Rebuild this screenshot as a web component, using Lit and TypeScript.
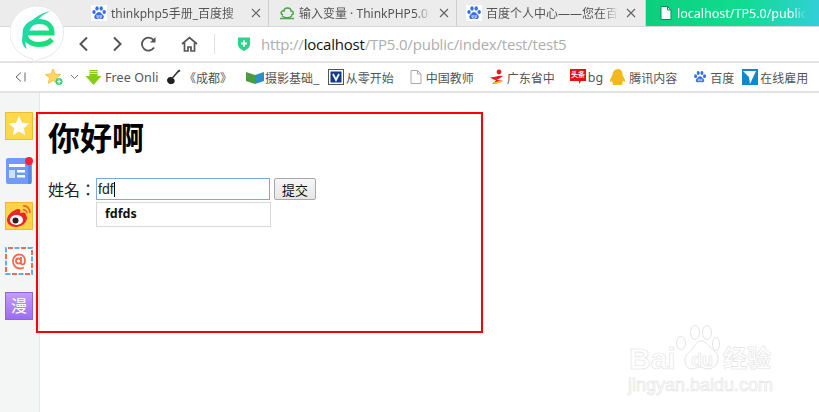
import { LitElement, html, css } from "lit";
import { customElement } from "lit/decorators.js";

const paw = (s: number) => html`<svg width=${s} height=${s} viewBox="0 0 16 16"><rect width="16" height="16" fill="#fff"/><g fill="#3570e8"><ellipse cx="3" cy="7" rx="1.7" ry="2.1"/><ellipse cx="6" cy="3.4" rx="1.7" ry="2.2"/><ellipse cx="10.2" cy="3.4" rx="1.7" ry="2.2"/><ellipse cx="13.2" cy="7" rx="1.7" ry="2.1"/><path d="M8 7c2 0 2.600 2 4 3 1.500 1.200.9 4-1.200 4-1 0-1.800-.4-2.800-.4S6.300 14 5.300 14c-2.100 0-2.700-2.800-1.200-4C5.400 9 6 7 8 7z"/></g><path d="M6 10v2.400h1.300V10M9 10v2.400h1.300V10" fill="none" stroke="#fff" stroke-width=".7"/></svg>`;
const doc = (stroke: string, fill: string) => html`<svg width="12" height="14" viewBox="0 0 12 14"><path d="M1 .5h6.500L11 4v9.500H1z" fill=${fill} stroke=${stroke}/><path d="M7.500.5V4H11" fill="none" stroke=${stroke}/></svg>`;
const x = html`<svg class="x" width="10" height="10" viewBox="0 0 10 10"><path d="M1 1l8 8M9 1l-8 8" stroke="#666" stroke-width="1.200" fill="none"/></svg>`;

@customElement("app-root")
export class AppRoot extends LitElement {
  static styles = css`
    :host { display: block; width: 819px; height: 412px; overflow: hidden; position: relative; background: #fff; font-family: "Noto Sans CJK SC", "Liberation Sans", sans-serif; color: #000; }
    .tabs { height: 26px; background: #ececec; border-bottom: 1px solid #d8d8d8; display: flex; padding-left: 89px; }
    .tab { height: 26px; display: flex; align-items: center; gap: 4px; border-right: 1px solid #cfcfcf; font: 12px "Noto Sans", "Noto Sans CJK SC", sans-serif; color: #555; box-sizing: border-box; padding-left: 2px; white-space: nowrap; position: relative; flex: none; }
    .tab svg { flex: none; }
    .tab .t { flex: none; width: 132px; white-space: nowrap; -webkit-mask-image: linear-gradient(90deg,#000 88%,transparent); mask-image: linear-gradient(90deg,#000 88%,transparent); }
    .tab .x { margin-left: 4px; }
    .t1 { width: 180px; } .t2 { width: 188px; padding-left: 10px; } .t3 { width: 189px; padding-left: 9px; }
    .active { width: 174px; background: linear-gradient(90deg,#0ccf7c,#10dc90 55%,#33cfd8); color: #fff; border: 0; padding-left: 14px; font-size: 12.500px; gap: 5px; overflow: hidden; }
    .active .t { width: 130px; }
    .active .x { margin-left: 8px; }
    .active .x path { stroke: #555; }
    .addr { height: 34px; display: flex; align-items: center; padding-left: 78px; border-bottom: 2px solid #e4e4e4; background: #fff; }
    .nav { display: flex; align-items: center; gap: 16px; width: 136px; }
    .fwd { margin-left: 7px; } .rel { margin-left: 1px; } .home { margin-left: 8px; }
    .sep { width: 1px; height: 20px; background: #e0e0e0; margin-right: 22px; }
    .url { font: 15px "Open Sans", "Noto Sans", sans-serif; color: #aeaeae; margin-left: 10px; white-space: nowrap; letter-spacing: -0.2px; }
    .url b { font-weight: 400; color: #111; }
    .marks { height: 28px; display: flex; align-items: center; border-bottom: 2px solid #e2e2e2; padding-left: 15px; font: 12px "Noto Sans CJK SC", sans-serif; color: #555; white-space: nowrap; }
    .m { display: flex; align-items: center; gap: 1px; position: relative; flex: none; }
    .m svg { flex: none; }
    .latin { font: 12.500px "Noto Sans", sans-serif; }
    .star { margin-left: 19px; gap: 4px; } .chev { margin-left: 2px; }
    .free { margin-left: 6px; gap: 3px; } .free span { width: 50px; letter-spacing: .1px; }
    .gtr { margin-left: 11px; gap: 3px; }
    .pho { margin-left: 14px; } .vv { margin-left: 8px; gap: 2px; } .cn { margin-left: 16px; gap: 4px; }
    .gd { margin-left: 15px; gap: 2px; } .tt { margin-left: 15px; gap: 2px; } .qq { margin-left: 7px; gap: 3px; }
    .bd { margin-left: 16px; gap: 3px; } .hr { margin-left: 8px; gap: 2px; }
    .body { display: flex; height: 319px; }
    .side { height: 100%; background: #f4f6f5; border-right: 1px solid #e6e6e6; flex: none; display: flex; flex-direction: column; gap: 17px; padding: 19px 0 0 5px; box-sizing: border-box; width: 40px; }
    .ic { width: 28px; height: 28px; position: relative; box-sizing: border-box; display: block; overflow: visible; }
    .main { flex: 1; position: relative; }
    .box { width: 447px; height: 221px; margin: 19px 0 0 -4px; border: 2px solid #f00; box-sizing: border-box; padding: 4px 0 0 10px; }
    h1 { margin: 0; font: 700 32px/36px "Noto Sans CJK SC", sans-serif; height: 36px; }
    .form { display: flex; align-items: center; margin-top: 23px; font: 16px/22px "Noto Sans CJK TC", sans-serif; height: 24px; color: #222; }
    .lab { width: 48px; flex: none; white-space: nowrap; }
    .inp { width: 174px; height: 22px; border: 1.500px solid #7ea6e8; box-sizing: border-box; font: 14px/19px "Liberation Sans", sans-serif; padding-left: 1px; color: #222; display: flex; align-items: center; }
    .inp i { width: 1px; height: 15px; background: #000; }
    .btn { margin-left: 4px; width: 42px; height: 22px; border: 1px solid #a9a9a9; background: linear-gradient(#f6f6f6,#e6e6e6); border-radius: 2px; font: 13px "Noto Sans CJK SC", sans-serif; color: #111; padding: 0; box-sizing: border-box; }
    .sug { margin: 1px 0 0 48px; width: 175px; height: 25px; border: 1px solid #d8d8d8; box-sizing: border-box; font: 700 12.500px/22px "Noto Sans", sans-serif; padding-left: 8px; color: #111; }
    .logo { position: absolute; left: 10px; top: 5px; }
    .wm { position: absolute; left: 628px; top: 324px; width: 170px; height: 76px; color: #fff; }
    .wm span { position: absolute; -webkit-text-stroke: 0.600px #e2e2e2; white-space: nowrap; }
    .wm .ba { left: 1px; top: 20px; font: 700 30px/30px "Liberation Sans", sans-serif; }
    .wm .du { left: 63px; top: 26px; font: 700 18px/20px "Liberation Sans", sans-serif; }
    .wm .jy { left: 95px; top: 18px; font: 700 24px/30px "Noto Sans CJK SC", sans-serif; }
    .wm .ur { left: 0; top: 51px; font: 400 18px/20px "Liberation Sans", sans-serif; }
    .wm svg { position: absolute; left: 48px; top: 0; }
  `;

  render() {
    return html`
      <div class="tabs">
        <div class="tab t1">${paw(16)}<span class="t">thinkphp5手册_百度搜</span>${x}</div>
        <div class="tab t2"><svg width="16" height="14" viewBox="0 0 16 14"><path d="M4 9C1 8 2 4 5 5c0-4 7-4 7 0 3 0 3 4 0 4M3 10c3 2 7 2 10 0M1 12.500h14" fill="none" stroke="#4ca64c" stroke-width="1.500"/></svg><span class="t">输入变量 · ThinkPHP5.0</span>${x}</div>
        <div class="tab t3">${paw(16)}<span class="t">百度个人中心——您在百</span>${x}</div>
        <div class="tab active">${doc("#0a8f5c", "#fff")}<span class="t">localhost/TP5.0/public</span>${x}</div>
      </div>
      <div class="addr">
        <div class="nav">
          <svg width="11" height="16" viewBox="0 0 11 16"><path d="M9 1.500L2.500 8 9 14.500" fill="none" stroke="#555" stroke-width="2"/></svg>
          <svg class="fwd" width="11" height="16" viewBox="0 0 11 16"><path d="M2 1.500L8.500 8 2 14.500" fill="none" stroke="#555" stroke-width="2"/></svg>
          <svg class="rel" width="17" height="17" viewBox="0 0 17 17"><path d="M14 11.500A6.500 6.500 0 1 1 13.500 4" fill="none" stroke="#555" stroke-width="1.800"/><path d="M15.500 1v5.500H10z" fill="#555"/></svg>
          <svg class="home" width="17" height="16" viewBox="0 0 17 16"><path d="M1 8l7.500-6.500L16 8M3.500 7v8h3.500v-4h3v4h3.500V7" fill="none" stroke="#555" stroke-width="1.700"/></svg>
        </div>
        <div class="sep"></div>
        <svg width="14" height="16" viewBox="0 0 14 16"><path d="M1 1.500h12v7c0 3-3 5-6 6.500-3-1.500-6-3.500-6-6.500z" fill="#2bd48c"/><path d="M7 4.500v6M4 7.500h6" stroke="#fff" stroke-width="2"/></svg>
        <div class="url">http://<b>localhost</b>/TP5.0/public/index/test/test5</div>
      </div>
      <div class="marks">
        <svg width="11" height="12" viewBox="0 0 11 12"><path d="M6 1.500L1 6l5 4.500M10 1.500v9" fill="none" stroke="#666"/></svg>
        <div class="m star"><svg width="19" height="18" viewBox="0 0 19 18"><path d="M8 1l2.200 5 5.300.5-4 3.600 1.200 5.300L8 12.600l-4.700 2.800 1.200-5.300-4-3.600L5.800 6z" fill="#ffd75e" stroke="#e8b93a" stroke-width=".8"/><circle cx="14" cy="13.500" r="3.500" fill="#4cc97a"/><path d="M14 11.500v4M12 13.500h4" stroke="#fff" stroke-width="1.200"/></svg><svg class="chev" width="9" height="6" viewBox="0 0 9 6"><path d="M1 1l3.500 3.500L8 1" fill="none" stroke="#777"/></svg></div>
        <div class="m free latin"><svg width="17" height="17" viewBox="0 0 17 17"><path d="M4.500 1h8v6h4L8.500 16 .5 7h4z" fill="#84cc16"/><path d="M4.500 2.500h8M4.500 4.500h8" stroke="#d6f0a0"/></svg><span>Free Onli</span></div>
        <div class="m gtr"><svg width="15" height="16" viewBox="0 0 15 16"><path d="M2.500 8.500c1.500-1 3.500-.5 5 1s1.500 3 .7 4.200c-1.200 1.800-4.200 1.800-6 .2-1.800-1.700-1.500-4 .3-5.400z" fill="#222"/><path d="M6 9.500l6.500-7.500" stroke="#333" stroke-width="1.600"/><path d="M11.500 2l2-1.500 1 1.500-2 1.500z" fill="#333"/></svg><span>《成都》</span></div>
        <div class="m pho"><svg width="18" height="15" viewBox="0 0 18 15"><path d="M0 2l9 3v9L0 11z" fill="#4c9a3c"/><path d="M9 5l9-3v9l-9 3z" fill="#2b8fc4"/></svg><span>摄影基础_</span></div>
        <div class="m vv"><svg width="16" height="16" viewBox="0 0 16 16"><rect x=".5" y=".5" width="15" height="15" fill="#fff" stroke="#555"/><rect x="2.500" y="2.500" width="11" height="11" fill="#123a8c"/><path d="M5 5l3 6 3-6" fill="none" stroke="#fff" stroke-width="1.800"/></svg><span>从零开始</span></div>
        <div class="m cn">${doc("#aaa", "#fff")}<span>中国教师</span></div>
        <div class="m gd"><svg width="16" height="16" viewBox="0 0 16 16"><circle cx="10" cy="3" r="2.400" fill="#e02020"/><path d="M1 8c4 1 8-2 13-1-3 2-5 4-8 4 3 0 6 0 8 1-4 2-8 3-11 3 2-1 3-3 4-4-2 0-4-1-6-3z" fill="#e02020"/><path d="M4 14c3 0 6-1 9-2" stroke="#f0c020" stroke-width="1.500" fill="none"/></svg><span>广东省中</span></div>
        <div class="m tt latin"><svg width="16" height="18" viewBox="0 0 16 18"><path d="M0 1h16v12h-5l-2 3v-3H0z" fill="#e81010"/><text x="8" y="9" font-size="7" font-weight="700" fill="#fff" text-anchor="middle" font-family="Noto Sans CJK SC">头条</text></svg><span>bg</span></div>
        <div class="m qq"><svg width="16" height="18" viewBox="0 0 16 18"><path d="M8 1c3.500 0 4.500 3 4.500 6 1 2 3 5 2.500 6.500-.4.800-1.500 0-2-1 0 1.500-1 3-1 3 1 .8.500 1.500-2 1.500H5c-2.500 0-3-.7-2-1.500 0 0-1-1.500-1-3-.5 1-1.600 1.800-2 1-.5-1.500 1.500-4.500 2.500-6.500C2.500 4 4.500 1 8 1z" fill="#f3b81e"/></svg><span>腾讯内容</span></div>
        <div class="m bd">${paw(14)}<span>百度</span></div>
        <div class="m hr"><svg width="16" height="16" viewBox="0 0 16 16"><rect width="16" height="16" fill="#0d8ac7"/><path d="M1 2l13 0-6 13-1-7z" fill="#fff"/></svg><span>在线雇用</span></div>
      </div>
      <div class="body">
        <div class="side">
          <svg class="ic" viewBox="0 0 28 28"><rect x=".5" y=".5" width="27" height="27" fill="#ffd84f" stroke="#f1bd2c"/><path d="M14 4l3 6.700 7.200.7-5.400 4.800 1.500 7.100L14 19.600 7.700 23.300l1.500-7.100-5.400-4.800 7.200-.7z" fill="#fff"/></svg>
          <svg class="ic" viewBox="0 0 28 28"><path d="M1 3a2 2 0 0 1 2-2h22a2 2 0 0 1 2 2v22a2 2 0 0 1-2 2H3a2 2 0 0 1-2-2z" fill="#6f9cf8"/><rect x="23" y="3" width="3" height="24" fill="#5b86e0"/><rect x="4" y="7" width="16" height="3" fill="#fff"/><rect x="4" y="13" width="6" height="8" fill="#cfe0ff"/><rect x="12" y="13" width="8" height="2.500" fill="#fff"/><rect x="12" y="18" width="8" height="2.500" fill="#fff"/><circle cx="24" cy="4" r="4" fill="#f5242e"/></svg>
          <svg class="ic" viewBox="0 0 28 28"><rect x=".5" y=".5" width="27" height="27" fill="#ffd24a" stroke="#f1b92c"/><path d="M2 18c0-5 6-10 11-11 2 0 3 1 2 4 3-1 6-1 6 2 0 1 1 1 1 3 0 5-6 9-11 9-5 0-9-3-9-7z" fill="#e8262c"/><ellipse cx="11.500" cy="18" rx="6.500" ry="5" fill="#fff"/><circle cx="10.500" cy="18.500" r="3" fill="#222"/><path d="M18 8c2-.5 4 1 4 3.500M18 4c4-1 7 3 7 7" fill="none" stroke="#e8662c" stroke-width="1.600"/></svg>
          <svg class="ic" viewBox="0 0 28 28"><rect x="1" y="1" width="26" height="26" fill="#fff"/><g fill="none" stroke-width="2"><rect x="1" y="1" width="26" height="26" stroke="#f26a50" stroke-dasharray="5 8" stroke-dashoffset="-2"/><rect x="1" y="1" width="26" height="26" stroke="#5ab0f0" stroke-dasharray="5 8" stroke-dashoffset="-8.500"/></g><path d="M19 20.500c-5 2.500-11 0-11-6.500 0-4 3-6.500 6-6.500 4 0 6 3 6 6 0 2-1 4-2.500 4s-1.500-1.500-1.500-2V10m0 4a2.500 2.500 0 1 1-5 0 2.500 2.500 0 0 1 5 0z" fill="none" stroke="#f26a50" stroke-width="1.800"/></svg>
          <svg class="ic" viewBox="0 0 28 28"><defs><linearGradient id="pg" x1="0" y1="0" x2="0" y2="1"><stop offset="0" stop-color="#c59bfa"/><stop offset="1" stop-color="#9a6cf0"/></linearGradient></defs><rect x=".5" y=".5" width="27" height="27" fill="url(#pg)" stroke="#8f62e6"/><text x="14" y="20" font-size="16" fill="#fff" text-anchor="middle" font-family="Noto Sans CJK SC">漫</text></svg>
        </div>
        <div class="main">
          <div class="box">
            <h1>你好啊</h1>
            <div class="form"><span class="lab">姓名：</span><div class="inp">fdf<i></i></div><button class="btn">提交</button></div>
            <div class="sug">fdfds</div>
          </div>
        </div>
      </div>
      <svg class="logo" width="56" height="60" viewBox="0 0 56 60">
        <defs><linearGradient id="lg" x1="0" y1="0" x2="1" y2="1"><stop offset="0" stop-color="#1dd8a8"/><stop offset="1" stop-color="#19e070"/></linearGradient></defs>
        <path d="M27 1a26.500 26.500 0 0 1 4 52.700L23 57l-.5-3.300A26.500 26.500 0 0 1 27 1z" fill="#fff" stroke="#e8e8e8"/>
        <path d="M15 28H42C42 20 36 16.500 29 16.500 21 16.500 15 22 15 28 15 36 22 39.500 29 39.500 34 39.500 39 38 42 34.500" fill="none" stroke="url(#lg)" stroke-width="5"/>
        <path d="M41 6C30 8 17 16 13 29 11 36 12 41 17 44 14 38 16 30 21 23 26 15 33 9 41 6z" fill="#20d8a8"/>
      </svg>
      <div class="wm">
        <svg width="44" height="48" viewBox="0 0 44 48"><g fill="#fff" stroke="#e4e4e4" stroke-width="1"><ellipse cx="5" cy="19" rx="4.500" ry="6.500"/><ellipse cx="19" cy="8.500" rx="4.500" ry="7"/><ellipse cx="31" cy="8.500" rx="4.500" ry="7"/><ellipse cx="40" cy="20" rx="3.500" ry="6.500"/><path d="M25 17c4 0 6 3 9 6 3 3 8 5 8 12 0 6-5 10-10 10-4 0-5-2-8-2s-5 2-8 2c-5 0-7-4-7-9 0-6 5-8 8-12 2-3 4-7 8-7z"/></g></svg>
        <span class="ba">Bai</span>
        <span class="du">du</span>
        <span class="jy">经验</span>
        <span class="ur">jingyan.baidu.com</span>
      </div>
    `;
  }
}
